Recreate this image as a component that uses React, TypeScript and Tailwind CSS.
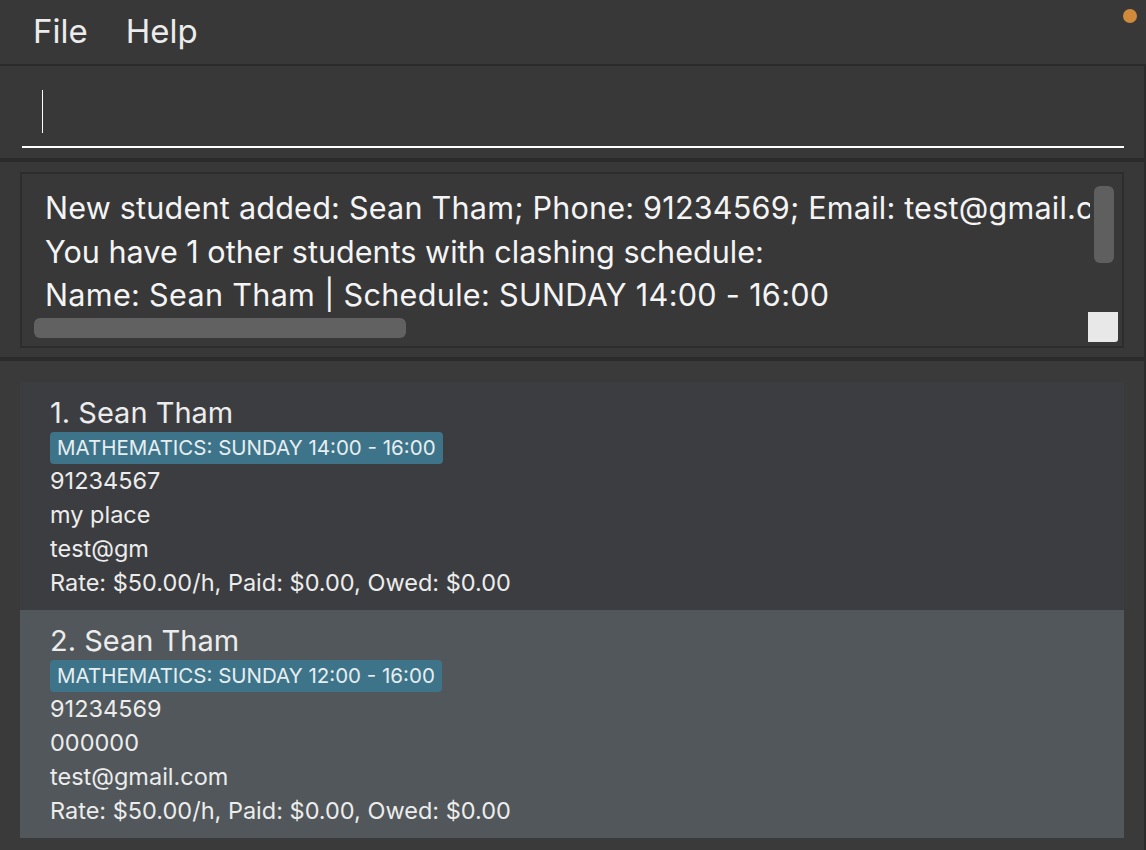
export default function App() {
  const students = [
    {
      idx: 1,
      name: "Sean Tham",
      tag: "MATHEMATICS: SUNDAY 14:00 - 16:00",
      phone: "91234567",
      address: "my place",
      email: "test@gm",
      bg: "bg-[#3c3d40]",
    },
    {
      idx: 2,
      name: "Sean Tham",
      tag: "MATHEMATICS: SUNDAY 12:00 - 16:00",
      phone: "91234569",
      address: "000000",
      email: "test@gmail.com",
      bg: "bg-[#51575a]",
    },
  ];
  return (
    <div className="w-[1146px] h-[850px] bg-[#383838] overflow-hidden flex flex-col text-[#f2f2f2] font-['Inter','Liberation_Sans',sans-serif]">
      {/* Menu bar */}
      <div className="relative h-[64px] flex items-center pl-[33px] gap-[38px] text-[33px] text-[#ececec] shrink-0">
        <span>File</span>
        <span>Help</span>
        <div className="absolute right-[9px] top-[9px] w-[14px] h-[14px] rounded-full bg-[#d08b3a]" />
      </div>
      <div className="h-[2px] bg-[#2b2b2b] shrink-0" />

      {/* Command box */}
      <div className="h-[92px] shrink-0 border-r-2 border-[#2b2b2b] pl-[22px] pr-[20px] pt-[24px]">
        <div className="ml-[20px] w-[1px] h-[43px] bg-white" />
        <div className="mt-[13px] h-[2px] bg-white" />
      </div>
      <div className="h-[4px] bg-[#2b2b2b] shrink-0" />

      {/* Result display */}
      <div className="h-[195px] shrink-0 border-r-2 border-[#2b2b2b] pl-[20px] pr-[20px] pt-[10px]">
        <div className="relative h-[176px] border-2 border-[#2d2d2d] overflow-hidden">
          <div className="w-[1068px] h-[138px] overflow-hidden pl-[23px] pt-[12px] text-[30.6px] leading-[43.5px] whitespace-nowrap text-[#f4f4f4]">
            <div className="tracking-[0.2px]">New student added: Sean Tham; Phone: 91234569; Email: test@gmail.com; Address: 000000</div>
            <div>You have 1 other students with clashing schedule:</div>
            <div className="tracking-[0.3px]">Name: Sean Tham | Schedule: SUNDAY 14:00 - 16:00</div>
          </div>
          <div className="absolute right-[8px] top-[12px] w-[20px] h-[77px] rounded-[6px] bg-[#5f5f5f]" />
          <div className="absolute left-[12px] top-[144px] w-[372px] h-[20px] rounded-[6px] bg-[#616161]" />
          <div className="absolute right-[4px] bottom-[4px] w-[30px] h-[30px] rounded-br-[3px] bg-[#e8e8e8]" />
        </div>
      </div>
      <div className="h-[4px] bg-[#2b2b2b] shrink-0" />

      {/* List */}
      <div className="flex-1 bg-[#3a3a3a] border-r-2 border-[#2b2b2b] pl-[20px] pr-[20px] pt-[21px]">
        {students.map((s) => (
          <div key={s.idx} className={`${s.bg} h-[228px] pl-[30px] pt-[14px] text-[#ececec]`}>
            <div className="text-[29px] leading-[34px]">
              {s.idx}. {s.name}
            </div>
            <div className="mt-[2px] flex">
              <span className="h-[32px] px-[7px] rounded-[4px] bg-[#3e7489] text-[20.5px] leading-[32px] text-[#e6eef1]">
                {s.tag}
              </span>
            </div>
            <div className="text-[23.5px] leading-[34px]">
              <div>{s.phone}</div>
              <div>{s.address}</div>
              <div>{s.email}</div>
              <div>Rate: $50.00/h, Paid: $0.00, Owed: $0.00</div>
            </div>
          </div>
        ))}
      </div>
    </div>
  );
}
